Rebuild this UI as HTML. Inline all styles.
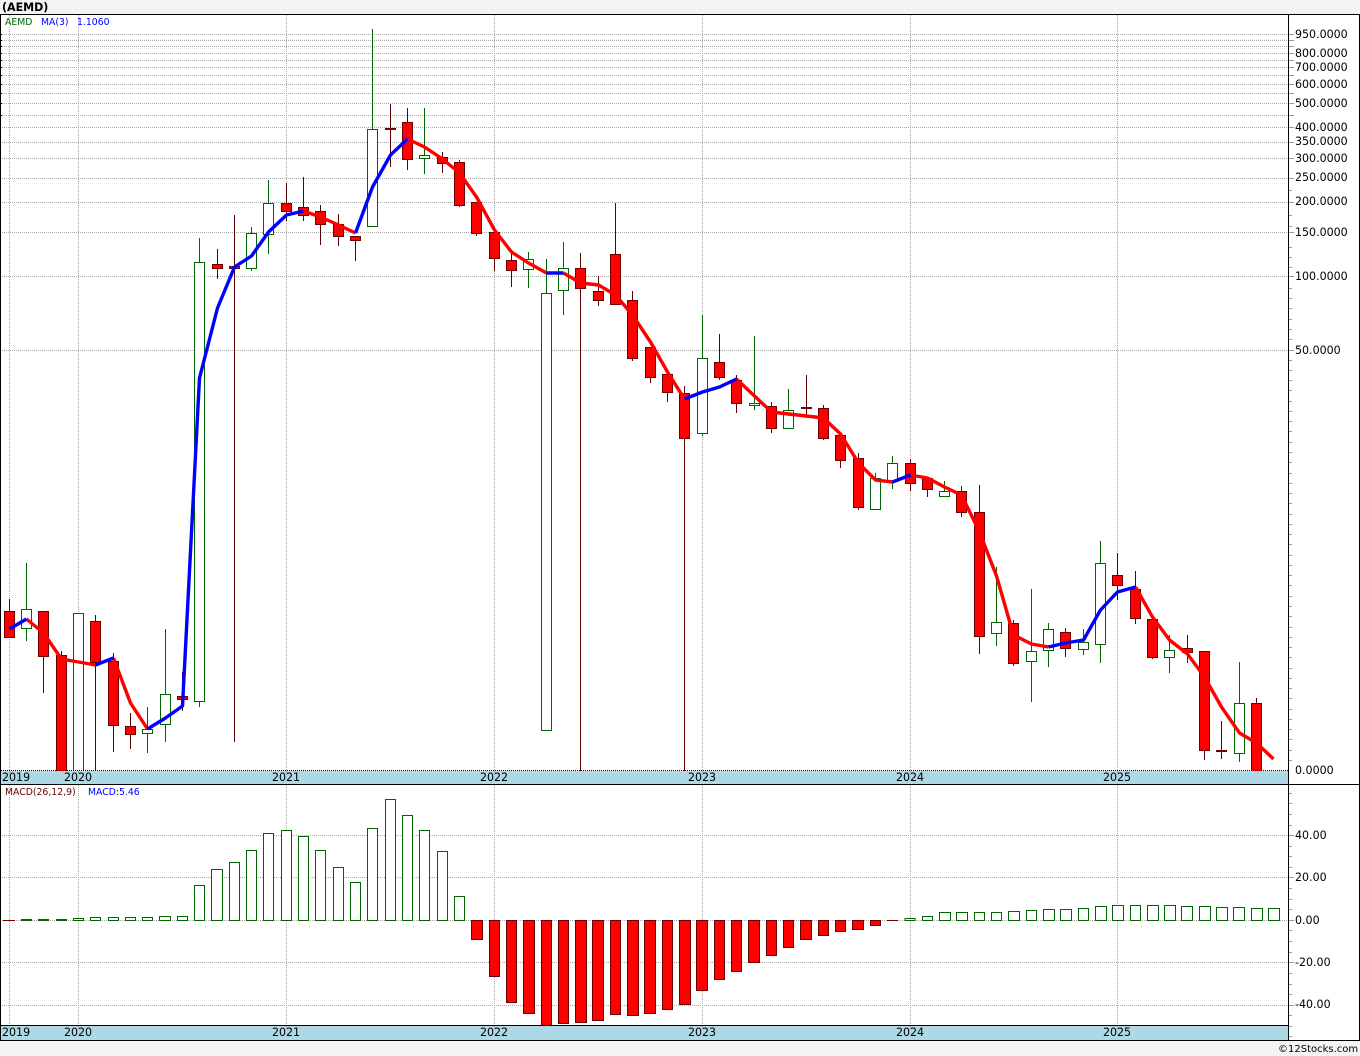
<!DOCTYPE html>
<html lang="en">
<head>
<meta charset="utf-8">
<title>AEMD Chart</title>
<style>
html,body{margin:0;padding:0;background:#f3f3f3;width:1360px;height:1056px;overflow:hidden}
svg{display:block}
text{font-family:"DejaVu Sans","Liberation Sans",sans-serif;font-size:11.05px;fill:#000}
.s{font-size:9.3px}
.c{shape-rendering:crispEdges}
.m{text-anchor:middle}
</style>
</head>
<body>
<svg width="1360" height="1056" viewBox="0 0 1360 1056" xmlns="http://www.w3.org/2000/svg">
<rect x="0" y="0" width="1360" height="1056" fill="#f3f3f3"/>
<rect x="0" y="14" width="1360" height="1026" fill="#fff"/>

<!-- grid -->
<path class="c" fill="none" stroke="#aaa" stroke-dasharray="1 1" d="M2 34.5H1288M2 40.5H1288M2 46.5H1288M2 53.5H1288M2 60.5H1288M2 67.5H1288M2 75.5H1288M2 84.5H1288M2 93.5H1288M2 103.5H1288M2 115.5H1288M2 127.5H1288M2 142.5H1288M2 158.5H1288M2 178.5H1288M2 202.5H1288M2 232.5H1288M2 276.5H1288M2 350.5H1288M2 835.5H1288M2 877.5H1288M2 920.5H1288M2 962.5H1288M2 1005.5H1288M9.5 15V770M78.5 15V770M286.5 15V770M494.5 15V770M702.5 15V770M910.5 15V770M1117.5 15V770M9.5 785V1025M78.5 785V1025M286.5 785V1025M494.5 785V1025M702.5 785V1025M910.5 785V1025M1117.5 785V1025"/>
<path class="c" fill="none" stroke="#000" d="M1 34.5H2M1 40.5H2M1 46.5H2M1 53.5H2M1 60.5H2M1 67.5H2M1 75.5H2M1 84.5H2M1 93.5H2M1 103.5H2M1 115.5H2"/>

<!-- wicks -->
<g class="c" fill="none" stroke-width="1">
<path stroke="#5c0000" d="M9.5 599V637M43.5 656V693M61.5 651V655M95.5 615V771M113.5 653V752M130.5 713V749M182.5 672V711M217.5 249V279M234.5 215V742M286.5 183V221M303.5 177V221M320.5 205V245M338.5 214V246M355.5 236V261M390.5 104V167M407.5 108V170M442.5 152V173M459.5 160V207M476.5 202V236M494.5 232V271M511.5 253V287M580.5 253V771M598.5 276V306M615.5 203V305M632.5 291V361M650.5 347V383M667.5 370V402M684.5 386V771M719.5 334V380M736.5 375V413M771.5 402V433M806.5 375V418M823.5 405V440M840.5 435V468M858.5 453V510M910.5 459V491M927.5 478V497M961.5 486V517M979.5 485V654M1013.5 620V666M1065.5 628V657M1117.5 553V600M1135.5 571V624M1152.5 619V659M1187.5 635V663M1204.5 651V760M1221.5 721V759M1256.5 698V771"/>
<path stroke="#006400" d="M26.5 563V641M147.5 707V753M165.5 629V742M199.5 238V707M251.5 227V271M268.5 180V254M372.5 29V227M424.5 108V174M528.5 252V288M546.5 259V731M563.5 242V315M702.5 315V436M754.5 336V410M788.5 389V428M875.5 473V509M892.5 456V489M944.5 481V496M996.5 567V646M1031.5 589V702M1048.5 623V667M1083.5 629V655M1100.5 541V663M1169.5 635V673M1239.5 662V762"/>
</g>

<!-- hollow bodies -->
<path class="c" fill="#fff" stroke="#006400" d="M21.5 609.5h10v19h-10zM73.5 613.5h10v158h-10zM142.5 729.5h10v4h-10zM160.5 694.5h10v30h-10zM194.5 262.5h10v439h-10zM246.5 233.5h10v35h-10zM263.5 203.5h10v31h-10zM367.5 129.5h10v97h-10zM419.5 155.5h10v3h-10zM523.5 259.5h10v10h-10zM541.5 293.5h10v437h-10zM558.5 268.5h10v22h-10zM697.5 358.5h10v75h-10zM749.5 403.5h10v2h-10zM783.5 410.5h10v18h-10zM870.5 478.5h10v31h-10zM887.5 463.5h10v18h-10zM939.5 491.5h10v5h-10zM991.5 622.5h10v11h-10zM1026.5 651.5h10v10h-10zM1043.5 629.5h10v21h-10zM1078.5 642.5h10v7h-10zM1095.5 563.5h10v81h-10zM1164.5 650.5h10v7h-10zM1234.5 703.5h10v50h-10z"/>

<!-- red bodies -->
<path class="c" fill="#f00" stroke="#700000" d="M4.5 611.5h10v26h-10zM38.5 611.5h10v45h-10zM56.5 655.5h10v116h-10zM90.5 621.5h10v41h-10zM108.5 661.5h10v64h-10zM125.5 726.5h10v8h-10zM177.5 696.5h10v3h-10zM212.5 264.5h10v4h-10zM229.5 266.5h10v2h-10zM281.5 203.5h10v8h-10zM298.5 207.5h10v8h-10zM315.5 211.5h10v13h-10zM333.5 224.5h10v12h-10zM350.5 236.5h10v4h-10zM385.5 128.5h10v1h-10zM402.5 122.5h10v37h-10zM437.5 157.5h10v6h-10zM454.5 162.5h10v43h-10zM471.5 202.5h10v31h-10zM489.5 232.5h10v26h-10zM506.5 260.5h10v10h-10zM575.5 268.5h10v20h-10zM593.5 291.5h10v9h-10zM610.5 254.5h10v50h-10zM627.5 300.5h10v58h-10zM645.5 347.5h10v30h-10zM662.5 374.5h10v18h-10zM679.5 393.5h10v45h-10zM714.5 362.5h10v15h-10zM731.5 380.5h10v23h-10zM766.5 406.5h10v22h-10zM801.5 407.5h10v1h-10zM818.5 408.5h10v30h-10zM835.5 435.5h10v25h-10zM853.5 458.5h10v49h-10zM905.5 463.5h10v20h-10zM922.5 478.5h10v11h-10zM956.5 491.5h10v21h-10zM974.5 512.5h10v124h-10zM1008.5 623.5h10v40h-10zM1060.5 632.5h10v16h-10zM1112.5 575.5h10v10h-10zM1130.5 589.5h10v29h-10zM1147.5 619.5h10v38h-10zM1182.5 648.5h10v4h-10zM1199.5 651.5h10v99h-10zM1216.5 750.5h10v1h-10zM1251.5 703.5h10v68h-10z"/>

<!-- MA line -->
<g fill="none" stroke-width="3.4" stroke-linejoin="round" stroke-linecap="butt">
<path stroke="#f00" d="M26.5 619L43.5 633L61.5 659L78.5 662L95.5 665M113.5 658L130.5 703L147.5 729M303.5 211L320.5 217L338.5 225L355.5 233M407.5 139L424.5 147L442.5 159L459.5 173L476.5 197L494.5 230L511.5 252L528.5 263L546.5 273M563.5 273L580.5 283L598.5 285L615.5 295L632.5 315L650.5 342L667.5 372L684.5 399M736.5 379L754.5 396L771.5 412L788.5 414L806.5 416L823.5 418L840.5 434L858.5 463L875.5 480L892.5 482M910.5 475L927.5 478L944.5 487L961.5 495L979.5 532L996.5 576L1013.5 635L1031.5 644L1048.5 647M1135.5 587L1152.5 617L1169.5 640L1187.5 654L1204.5 677L1221.5 707L1239.5 733L1256.5 743L1273.5 759"/>
<path stroke="#00f" d="M9.5 629L26.5 619M95.5 665L113.5 658M147.5 729L165.5 718L182.5 706L199.5 378L217.5 308L234.5 267L251.5 256L268.5 232L286.5 215L303.5 211M355.5 233L372.5 187L390.5 155L407.5 139M546.5 273L563.5 273M684.5 399L702.5 392L719.5 387L736.5 379M892.5 482L910.5 475M1048.5 647L1065.5 643L1083.5 640L1100.5 610L1117.5 592L1135.5 587"/>
</g>

<!-- MACD -->
<path class="c" fill="none" stroke="#700000" d="M3 920.5H15M887 920.5H898"/>
<path class="c" fill="#006400" d="M21 919h11v2h-11zM38 919h11v2h-11zM56 919h11v2h-11z"/>
<path class="c" fill="#fff" stroke="#006400" d="M73.5 918.5h10v2h-10zM90.5 917.5h10v3h-10zM108.5 917.5h10v3h-10zM125.5 917.5h10v3h-10zM142.5 917.5h10v3h-10zM159.5 916.5h11v4h-11zM177.5 916.5h10v4h-10zM194.5 885.5h10v35h-10zM211.5 869.5h11v51h-11zM229.5 862.5h10v58h-10zM246.5 850.5h10v70h-10zM263.5 833.5h10v87h-10zM281.5 830.5h10v90h-10zM298.5 836.5h10v84h-10zM315.5 850.5h10v70h-10zM333.5 867.5h10v53h-10zM350.5 882.5h10v38h-10zM367.5 828.5h10v92h-10zM385.5 799.5h10v121h-10zM402.5 815.5h10v105h-10zM419.5 830.5h10v90h-10zM437.5 851.5h10v69h-10zM454.5 896.5h10v24h-10zM905 918.5h10v2h-10zM922.5 916.5h10v4h-10zM939.5 912.5h11v8h-11zM956.5 912.5h11v8h-11zM974.5 912.5h10v8h-10zM991.5 912.5h10v8h-10zM1008.5 911.5h11v9h-11zM1026.5 910.5h10v10h-10zM1043.5 909.5h11v11h-11zM1060.5 909.5h11v11h-11zM1078.5 908.5h10v12h-10zM1095.5 906.5h11v14h-11zM1112.5 905.5h11v15h-11zM1130.5 905.5h10v15h-10zM1147.5 905.5h11v15h-11zM1164.5 905.5h11v15h-11zM1181.5 906.5h11v14h-11zM1199.5 906.5h11v14h-11zM1216.5 907.5h11v13h-11zM1233.5 907.5h11v13h-11zM1251.5 908.5h11v12h-11zM1268.5 908.5h11v12h-11z"/>
<path class="c" fill="#f00" stroke="#700000" d="M471.5 920.5h11v19h-11zM489.5 920.5h10v56h-10zM506.5 920.5h10v82h-10zM523.5 920.5h11v93h-11zM541.5 920.5h10v105h-10zM558.5 920.5h10v103h-10zM575.5 920.5h11v102h-11zM592.5 920.5h11v100h-11zM610.5 920.5h10v94h-10zM627.5 920.5h11v95h-11zM644.5 920.5h11v93h-11zM662.5 920.5h10v89h-10zM679.5 920.5h11v84h-11zM696.5 920.5h11v70h-11zM714.5 920.5h10v59h-10zM731.5 920.5h10v51h-10zM748.5 920.5h11v42h-11zM766.5 920.5h10v35h-10zM783.5 920.5h10v27h-10zM800.5 920.5h11v19h-11zM818.5 920.5h10v15h-10zM835.5 920.5h10v11h-10zM852.5 920.5h11v9h-11zM870.5 920.5h10v5h-10z"/>

<!-- bands -->
<rect class="c" x="1" y="771" width="1287" height="13" fill="#add8e6"/>
<rect class="c" x="1" y="1026" width="1287" height="14" fill="#add8e6"/>
<path class="c" fill="none" stroke="#000" stroke-dasharray="1 1" d="M1 770.5H1288"/>
<path class="c" fill="none" stroke="#aaa" d="M9.5 771V774M78.5 771V774M286.5 771V774M494.5 771V774M702.5 771V774M910.5 771V774M1117.5 771V774M9.5 1026V1029M78.5 1026V1029M286.5 1026V1029M494.5 1026V1029M702.5 1026V1029M910.5 1026V1029M1117.5 1026V1029"/>

<!-- axis ticks -->
<path class="c" fill="none" stroke="#999" d="M1289 34.5H1294M1289 40.5H1294M1289 46.5H1294M1289 53.5H1294M1289 60.5H1294M1289 67.5H1294M1289 75.5H1294M1289 84.5H1294M1289 93.5H1294M1289 103.5H1294M1289 115.5H1294M1289 127.5H1294M1289 142.5H1294M1289 158.5H1294M1289 178.5H1294M1289 202.5H1294M1289 232.5H1294M1289 276.5H1294M1289 350.5H1294M1289 835.5H1294M1289 877.5H1294M1289 920.5H1294M1289 962.5H1294M1289 1005.5H1294M1289 190.5H1292M1289 215.5H1292M1289 226.5H1292M1289 247.5H1292M1289 257.5H1292M1289 267.5H1292M1289 288.5H1292M1289 298.5H1292M1289 308.5H1292M1289 319.5H1292M1289 329.5H1292M1289 339.5H1292M1289 360.5H1292M1289 370.5H1292M1289 380.5H1292M1289 390.5H1292M1289 401.5H1292M1289 411.5H1292M1289 421.5H1292M1289 431.5H1292M1289 442.5H1292M1289 452.5H1292M1289 462.5H1292M1289 473.5H1292M1289 483.5H1292M1289 493.5H1292M1289 503.5H1292M1289 514.5H1292M1289 524.5H1292M1289 534.5H1292M1289 544.5H1292M1289 555.5H1292M1289 565.5H1292M1289 575.5H1292M1289 585.5H1292M1289 596.5H1292M1289 606.5H1292M1289 616.5H1292M1289 627.5H1292M1289 637.5H1292M1289 647.5H1292M1289 657.5H1292M1289 668.5H1292M1289 678.5H1292M1289 688.5H1292M1289 698.5H1292M1289 709.5H1292M1289 719.5H1292M1289 729.5H1292M1289 739.5H1292M1289 750.5H1292M1289 760.5H1292M1289 793.5H1292M1289 803.5H1292M1289 814.5H1292M1289 825.5H1292M1289 846.5H1292M1289 856.5H1292M1289 867.5H1292M1289 888.5H1292M1289 899.5H1292M1289 909.5H1292M1289 930.5H1292M1289 941.5H1292M1289 952.5H1292M1289 973.5H1292M1289 984.5H1292M1289 994.5H1292M1289 1015.5H1292M1289 1026.5H1292M1289 1036.5H1292"/>

<!-- frame -->
<path class="c" fill="none" stroke="#000" d="M0 14.5H1360M0 784.5H1360M0 1025.5H1288M0 1040.5H1360M0.5 14V1041M1288.5 14V1041M1359.5 14V1041"/>

<!-- text -->
<text x="2" y="11" style="font-weight:bold">(AEMD)</text>
<text class="s" x="5" y="25" style="fill:#006400">AEMD</text>
<text class="s" x="41" y="25" style="fill:#00f">MA(3)</text>
<text class="s" x="77" y="25" style="fill:#00f">1.1060</text>
<text class="s" x="5" y="795" style="fill:#600">MACD(26,12,9)</text>
<text class="s" x="88" y="795" style="fill:#00f">MACD:5.46</text>

<text x="1295" y="38">950.0000</text>
<text x="1295" y="57">800.0000</text>
<text x="1295" y="71">700.0000</text>
<text x="1295" y="88">600.0000</text>
<text x="1295" y="107">500.0000</text>
<text x="1295" y="131">400.0000</text>
<text x="1295" y="145">350.0000</text>
<text x="1295" y="162">300.0000</text>
<text x="1295" y="181">250.0000</text>
<text x="1295" y="205">200.0000</text>
<text x="1295" y="236">150.0000</text>
<text x="1295" y="280">100.0000</text>
<text x="1295" y="354">50.0000</text>
<text x="1295" y="774">0.0000</text>
<text x="1295" y="839">40.00</text>
<text x="1295" y="881">20.00</text>
<text x="1295" y="924">0.00</text>
<text x="1295" y="966">-20.00</text>
<text x="1295" y="1008">-40.00</text>

<text x="2" y="781">2019</text>
<text class="m" x="78" y="781">2020</text>
<text class="m" x="286" y="781">2021</text>
<text class="m" x="494" y="781">2022</text>
<text class="m" x="702" y="781">2023</text>
<text class="m" x="910" y="781">2024</text>
<text class="m" x="1117" y="781">2025</text>
<text x="2" y="1036">2019</text>
<text class="m" x="78" y="1036">2020</text>
<text class="m" x="286" y="1036">2021</text>
<text class="m" x="494" y="1036">2022</text>
<text class="m" x="702" y="1036">2023</text>
<text class="m" x="910" y="1036">2024</text>
<text class="m" x="1117" y="1036">2025</text>

<text x="1278" y="1052" style="font-size:10px">©</text>
<text x="1288" y="1052" style="font-size:10px">12Stocks.com</text>
</svg>
</body>
</html>
